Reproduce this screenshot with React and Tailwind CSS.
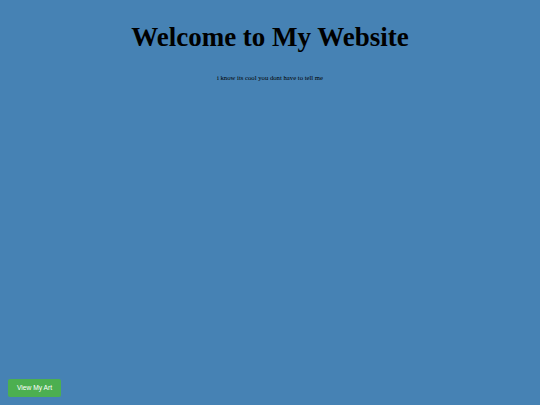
export default function App() {
  return (
    <div className="min-h-[405px] h-[405px] bg-[#4682b4] flex flex-col font-['Liberation_Serif',serif] text-black">
      <h1 className="text-center font-bold text-[27px] leading-[32px] mt-[21px]">Welcome to My Website</h1>
      <p className="text-center text-[6.7px] leading-[10px] mt-[20px]">i know its cool you dont have to tell me</p>
      <div className="mt-auto mb-[8px] ml-[8px]">
        <button className="bg-[#4caf50] text-white font-['Liberation_Sans',sans-serif] text-[6.7px] w-[53px] h-[18px] rounded-[2px]">View My Art</button>
      </div>
    </div>
  );
}
